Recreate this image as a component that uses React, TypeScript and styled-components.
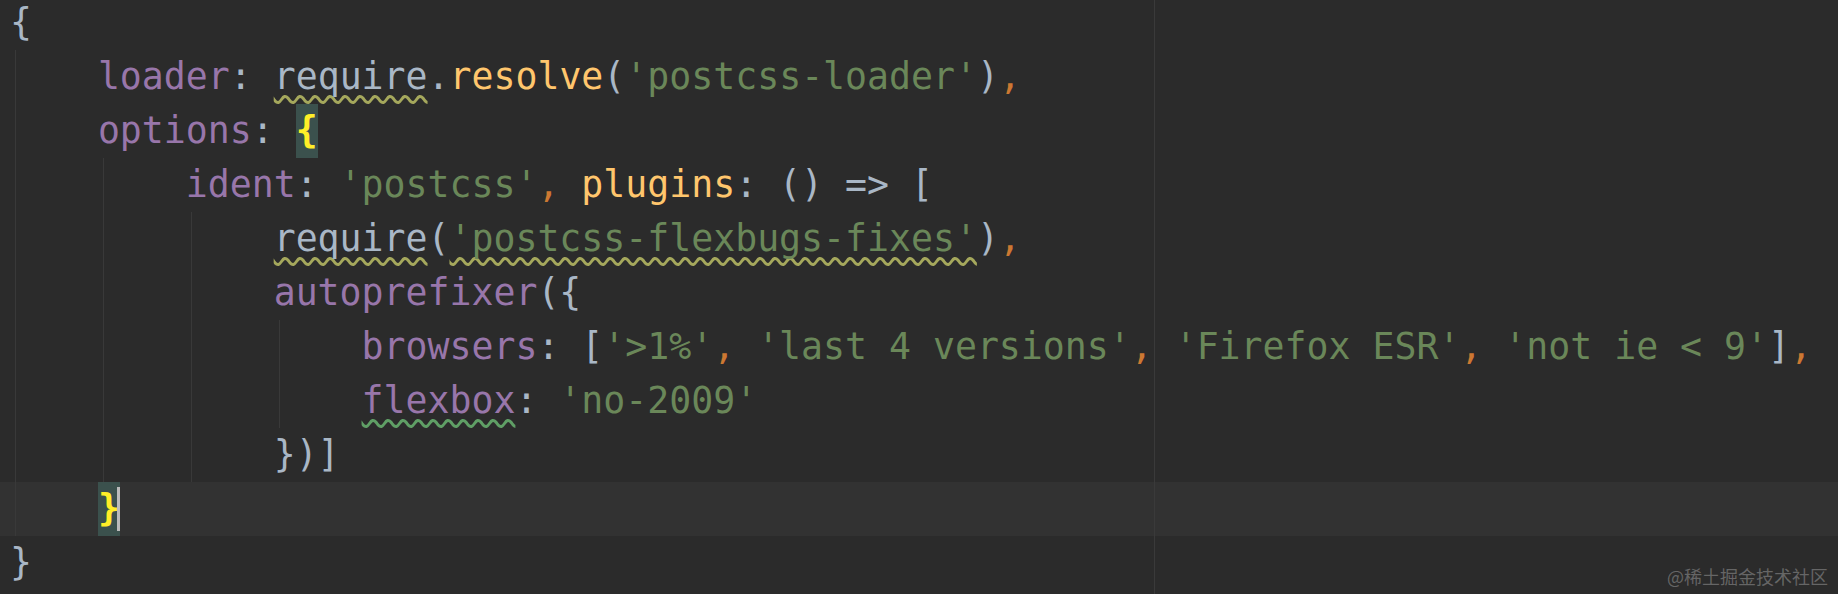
import React from 'react';
import styled, { createGlobalStyle, css } from 'styled-components';

type Kind = 'p' | 'k' | 's' | 'c' | 'f';
type Wave = 'warn' | 'typo';

interface Tok {
  t: string;
  k?: Kind;
  w?: Wave;
  brace?: boolean;
}

interface Line {
  indent: number;
  toks: Tok[];
  current?: boolean;
  caret?: boolean;
}

const palette: Record<Kind, string> = {
  p: '#a9b7c6',
  k: '#9876aa',
  s: '#6a8759',
  c: '#cc7832',
  f: '#ffc66d',
};

const waves: Record<Wave, string> = {
  warn: '#a5a85c',
  typo: '#5f9f65',
};

const GlobalStyle = createGlobalStyle`
  html, body {
    margin: 0;
    padding: 0;
    background: #2b2b2b;
  }
`;

const Editor = styled.div`
  position: relative;
  width: 1838px;
  height: 594px;
  overflow: hidden;
  background: #2b2b2b;
  font-family: 'DejaVu Sans Mono', 'Liberation Mono', monospace;
  font-size: 36.5px;

  /* right margin guide */
  &::after {
    content: '';
    position: absolute;
    top: 0;
    bottom: 0;
    left: 1154px;
    width: 1px;
    background: #3a3a3a;
  }
`;

const Code = styled.div`
  margin-top: -4px;
`;

const Row = styled.div<{ $current?: boolean }>`
  display: flex;
  align-items: flex-start;
  height: 54px;
  padding-left: 10px;
  line-height: 54px;
  white-space: pre;
  background: ${({ $current }) => ($current ? '#323232' : 'transparent')};
`;

const Indent = styled.span`
  display: inline-block;
  width: 4ch;
  height: 54px;
  background: linear-gradient(#393939, #393939) 5px 0 / 1px 100% no-repeat;
`;

const Token = styled.span<{ $kind: Kind; $wave?: Wave }>`
  color: ${({ $kind }) => palette[$kind]};
  ${({ $wave }) =>
    $wave &&
    css`
      text-decoration: underline wavy ${waves[$wave]};
      text-decoration-thickness: 2.6px;
      text-underline-offset: 6px;
      text-decoration-skip-ink: none;
    `}
`;

const Brace = styled.span`
  display: inline-block;
  height: 54px;
  background: #3b514d;
  color: #ffef28;
  font-weight: bold;
`;

const Caret = styled.span`
  display: inline-block;
  width: 3px;
  height: 44px;
  margin: 5px 0 0 -3px;
  background: #bbbbbb;
`;

const Watermark = styled.div`
  position: absolute;
  right: 10px;
  bottom: 6px;
  font-family: 'Noto Sans CJK SC', sans-serif;
  font-size: 18px;
  line-height: 24px;
  color: rgba(255, 255, 255, 0.28);
`;

const lines: Line[] = [
  { indent: 0, toks: [{ t: '{' }] },
  {
    indent: 1,
    toks: [
      { t: 'loader', k: 'k' },
      { t: ': ' },
      { t: 'require', w: 'warn' },
      { t: '.' },
      { t: 'resolve', k: 'f' },
      { t: '(' },
      { t: "'postcss-loader'", k: 's' },
      { t: ')' },
      { t: ',', k: 'c' },
    ],
  },
  {
    indent: 1,
    toks: [{ t: 'options', k: 'k' }, { t: ': ' }, { t: '{', brace: true }],
  },
  {
    indent: 2,
    toks: [
      { t: 'ident', k: 'k' },
      { t: ': ' },
      { t: "'postcss'", k: 's' },
      { t: ', ', k: 'c' },
      { t: 'plugins', k: 'f' },
      { t: ': () => [' },
    ],
  },
  {
    indent: 3,
    toks: [
      { t: 'require', w: 'warn' },
      { t: '(' },
      { t: "'postcss-flexbugs-fixes'", k: 's', w: 'warn' },
      { t: ')' },
      { t: ',', k: 'c' },
    ],
  },
  { indent: 3, toks: [{ t: 'autoprefixer', k: 'k' }, { t: '({' }] },
  {
    indent: 4,
    toks: [
      { t: 'browsers', k: 'k' },
      { t: ': [' },
      { t: "'>1%'", k: 's' },
      { t: ', ', k: 'c' },
      { t: "'last 4 versions'", k: 's' },
      { t: ', ', k: 'c' },
      { t: "'Firefox ESR'", k: 's' },
      { t: ', ', k: 'c' },
      { t: "'not ie < 9'", k: 's' },
      { t: ']' },
      { t: ',', k: 'c' },
    ],
  },
  {
    indent: 4,
    toks: [
      { t: 'flexbox', k: 'k', w: 'typo' },
      { t: ': ' },
      { t: "'no-2009'", k: 's' },
    ],
  },
  { indent: 3, toks: [{ t: '})]' }] },
  { indent: 1, toks: [{ t: '}', brace: true }], current: true, caret: true },
  { indent: 0, toks: [{ t: '}' }] },
];

const CodeLine = ({ line }: { line: Line }) => (
  <Row $current={line.current}>
    {Array.from({ length: line.indent }, (_, i) => (
      <Indent key={`i${i}`} />
    ))}
    {line.toks.map((tok, i) =>
      tok.brace ? (
        <Brace key={i}>{tok.t}</Brace>
      ) : (
        <Token key={i} $kind={tok.k || 'p'} $wave={tok.w}>
          {tok.t}
        </Token>
      )
    )}
    {line.caret && <Caret />}
  </Row>
);

const App = () => {
  return (
    <>
      <GlobalStyle />
      <Editor>
        <Code>
          {lines.map((line, i) => (
            <CodeLine key={i} line={line} />
          ))}
        </Code>
        <Watermark>@稀土掘金技术社区</Watermark>
      </Editor>
    </>
  );
};

export default App;
